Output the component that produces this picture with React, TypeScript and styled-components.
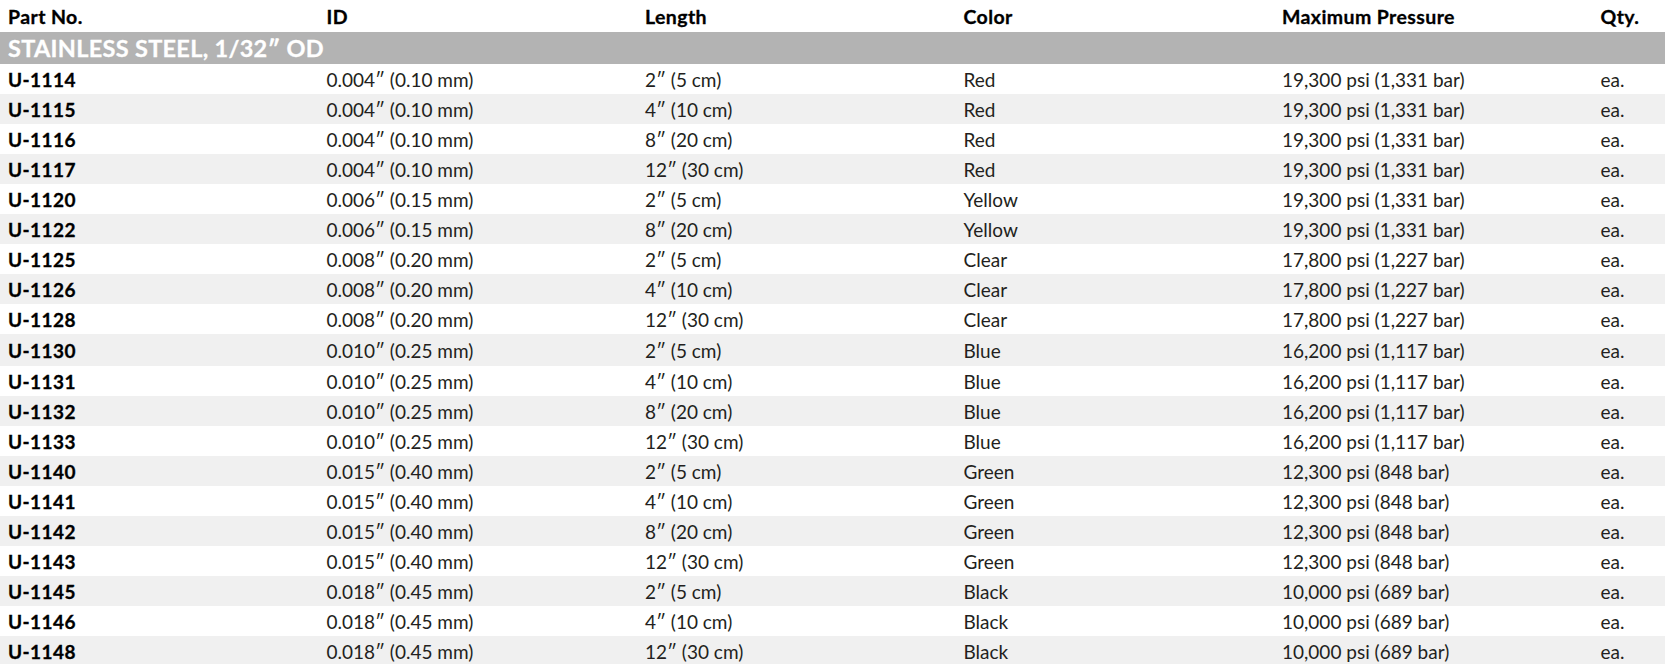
import React from "react";
import styled, { createGlobalStyle } from "styled-components";

const GlobalStyle = createGlobalStyle`
  html, body {
    margin: 0;
    padding: 0;
    background: #ffffff;
  }
  body {
    font-family: Lato, "Liberation Sans", sans-serif;
    color: #231f20;
  }
`;

interface PartRow {
  part: string;
  id: string;
  length: string;
  color: string;
  pressure: string;
  qty: string;
  tall?: boolean;
}

const rows: PartRow[] = [
  { part: "U-1114", id: "0.004″ (0.10 mm)", length: "2″ (5 cm)", color: "Red", pressure: "19,300 psi (1,331 bar)", qty: "ea." },
  { part: "U-1115", id: "0.004″ (0.10 mm)", length: "4″ (10 cm)", color: "Red", pressure: "19,300 psi (1,331 bar)", qty: "ea." },
  { part: "U-1116", id: "0.004″ (0.10 mm)", length: "8″ (20 cm)", color: "Red", pressure: "19,300 psi (1,331 bar)", qty: "ea." },
  { part: "U-1117", id: "0.004″ (0.10 mm)", length: "12″ (30 cm)", color: "Red", pressure: "19,300 psi (1,331 bar)", qty: "ea." },
  { part: "U-1120", id: "0.006″ (0.15 mm)", length: "2″ (5 cm)", color: "Yellow", pressure: "19,300 psi (1,331 bar)", qty: "ea." },
  { part: "U-1122", id: "0.006″ (0.15 mm)", length: "8″ (20 cm)", color: "Yellow", pressure: "19,300 psi (1,331 bar)", qty: "ea." },
  { part: "U-1125", id: "0.008″ (0.20 mm)", length: "2″ (5 cm)", color: "Clear", pressure: "17,800 psi (1,227 bar)", qty: "ea." },
  { part: "U-1126", id: "0.008″ (0.20 mm)", length: "4″ (10 cm)", color: "Clear", pressure: "17,800 psi (1,227 bar)", qty: "ea." },
  { part: "U-1128", id: "0.008″ (0.20 mm)", length: "12″ (30 cm)", color: "Clear", pressure: "17,800 psi (1,227 bar)", qty: "ea." },
  { part: "U-1130", id: "0.010″ (0.25 mm)", length: "2″ (5 cm)", color: "Blue", pressure: "16,200 psi (1,117 bar)", qty: "ea.", tall: true },
  { part: "U-1131", id: "0.010″ (0.25 mm)", length: "4″ (10 cm)", color: "Blue", pressure: "16,200 psi (1,117 bar)", qty: "ea." },
  { part: "U-1132", id: "0.010″ (0.25 mm)", length: "8″ (20 cm)", color: "Blue", pressure: "16,200 psi (1,117 bar)", qty: "ea." },
  { part: "U-1133", id: "0.010″ (0.25 mm)", length: "12″ (30 cm)", color: "Blue", pressure: "16,200 psi (1,117 bar)", qty: "ea." },
  { part: "U-1140", id: "0.015″ (0.40 mm)", length: "2″ (5 cm)", color: "Green", pressure: "12,300 psi (848 bar)", qty: "ea." },
  { part: "U-1141", id: "0.015″ (0.40 mm)", length: "4″ (10 cm)", color: "Green", pressure: "12,300 psi (848 bar)", qty: "ea." },
  { part: "U-1142", id: "0.015″ (0.40 mm)", length: "8″ (20 cm)", color: "Green", pressure: "12,300 psi (848 bar)", qty: "ea." },
  { part: "U-1143", id: "0.015″ (0.40 mm)", length: "12″ (30 cm)", color: "Green", pressure: "12,300 psi (848 bar)", qty: "ea." },
  { part: "U-1145", id: "0.018″ (0.45 mm)", length: "2″ (5 cm)", color: "Black", pressure: "10,000 psi (689 bar)", qty: "ea." },
  { part: "U-1146", id: "0.018″ (0.45 mm)", length: "4″ (10 cm)", color: "Black", pressure: "10,000 psi (689 bar)", qty: "ea." },
  { part: "U-1148", id: "0.018″ (0.45 mm)", length: "12″ (30 cm)", color: "Black", pressure: "10,000 psi (689 bar)", qty: "ea." },
];

const Table = styled.div`
  width: 1665px;
  display: flex;
  flex-direction: column;
`;

const GridRow = styled.div<{ $height: number; $shade?: boolean }>`
  display: grid;
  grid-template-columns: repeat(5, 318.5px) 1fr;
  align-items: center;
  height: ${(p) => p.$height}px;
  padding-left: 8px;
  background: ${(p) => (p.$shade ? "#f0f0f0" : "#ffffff")};
`;

const HeadCell = styled.div`
  font-size: 19.5px;
  font-weight: 700;
  letter-spacing: 0.4px;
  -webkit-text-stroke: 0.3px #000000;
  color: #000000;
  white-space: nowrap;
`;

const SectionBand = styled.div`
  height: 32px;
  display: flex;
  align-items: center;
  padding-left: 8px;
  background: #b3b3b3;
  color: #ffffff;
  font-size: 23.5px;
  font-weight: 700;
  letter-spacing: 0.3px;
  -webkit-text-stroke: 0.3px #ffffff;
  white-space: nowrap;
`;

const Cell = styled.div<{ $bold?: boolean }>`
  font-size: 19px;
  font-weight: ${(p) => (p.$bold ? 700 : 400)};
  letter-spacing: ${(p) => (p.$bold ? "0.45px" : "0")};
  -webkit-text-stroke: ${(p) => (p.$bold ? "0.3px #000000" : "0")};
  color: ${(p) => (p.$bold ? "#000000" : "#231f20")};
  white-space: nowrap;
`;

export default function App() {
  return (
    <>
      <GlobalStyle />
      <Table>
        <GridRow $height={32}>
          <HeadCell>Part No.</HeadCell>
          <HeadCell>ID</HeadCell>
          <HeadCell>Length</HeadCell>
          <HeadCell>Color</HeadCell>
          <HeadCell>Maximum Pressure</HeadCell>
          <HeadCell>Qty.</HeadCell>
        </GridRow>
        <SectionBand>STAINLESS STEEL, 1/32″ OD</SectionBand>
        {rows.map((r, i) => (
          <GridRow key={r.part} $height={r.tall ? 32 : 30} $shade={i % 2 === 1}>
            <Cell $bold>{r.part}</Cell>
            <Cell>{r.id}</Cell>
            <Cell>{r.length}</Cell>
            <Cell>{r.color}</Cell>
            <Cell>{r.pressure}</Cell>
            <Cell>{r.qty}</Cell>
          </GridRow>
        ))}
      </Table>
    </>
  );
}
